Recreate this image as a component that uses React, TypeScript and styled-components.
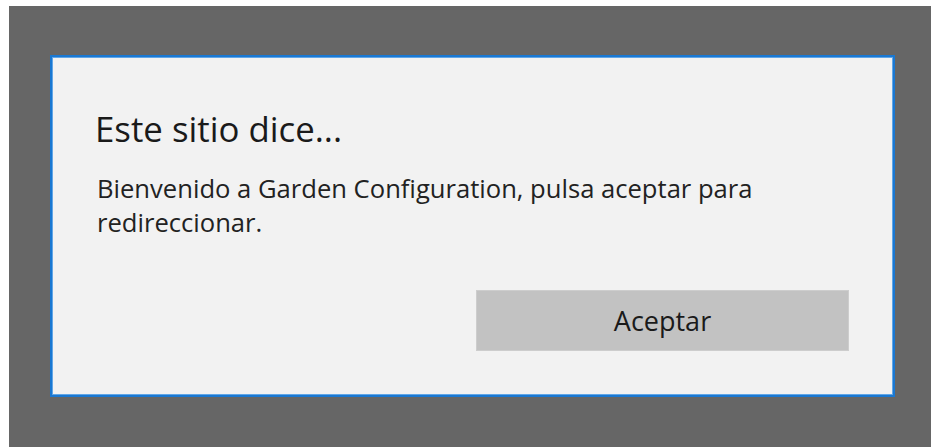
import styled, { createGlobalStyle } from 'styled-components';

const GlobalStyle = createGlobalStyle`
  html, body {
    margin: 0;
    padding: 0;
    background: #ffffff;
  }

  body {
    font-family: "Open Sans", "Noto Sans", sans-serif;
  }
`

const Overlay = styled.div`
  box-sizing: border-box;
  margin: 6px 0 0 9px;
  height: 441px;
  padding: 49px 36px 50px 41px;
  background: #666666;
`

const Dialog = styled.div`
  box-sizing: border-box;
  height: 342px;
  display: flex;
  flex-direction: column;
  padding: 0 44px 44px 43px;
  background: #f2f2f2;
  border: 2px solid #1a78d2;
  box-shadow: inset 0 0 0 1px #62a6e6;
`

const Title = styled.h1`
  margin: 50px 0 0;
  font-size: 34.8px;
  line-height: 44px;
  font-weight: 400;
  color: #1a1a1a;
`

const Message = styled.p`
  margin: 21px 0 0 2px;
  font-size: 25.6px;
  line-height: 34px;
  color: #222222;
`

const Footer = styled.div`
  margin-top: auto;
  display: flex;
  justify-content: flex-end;
`

const Button = styled.button`
  box-sizing: border-box;
  width: 373px;
  height: 61px;
  padding: 0;
  border: 1px solid #cdcdcd;
  background: #c2c2c2;
  font-family: inherit;
  font-size: 27px;
  color: #1a1a1a;
  cursor: pointer;
`

const App = () => {
  return (
    <>
      <GlobalStyle />
      <Overlay>
        <Dialog role="dialog">
          <Title>Este sitio dice...</Title>
          <Message>
            Bienvenido a Garden Configuration, pulsa aceptar para redireccionar.
          </Message>
          <Footer>
            <Button>Aceptar</Button>
          </Footer>
        </Dialog>
      </Overlay>
    </>
  )
}

export default App
